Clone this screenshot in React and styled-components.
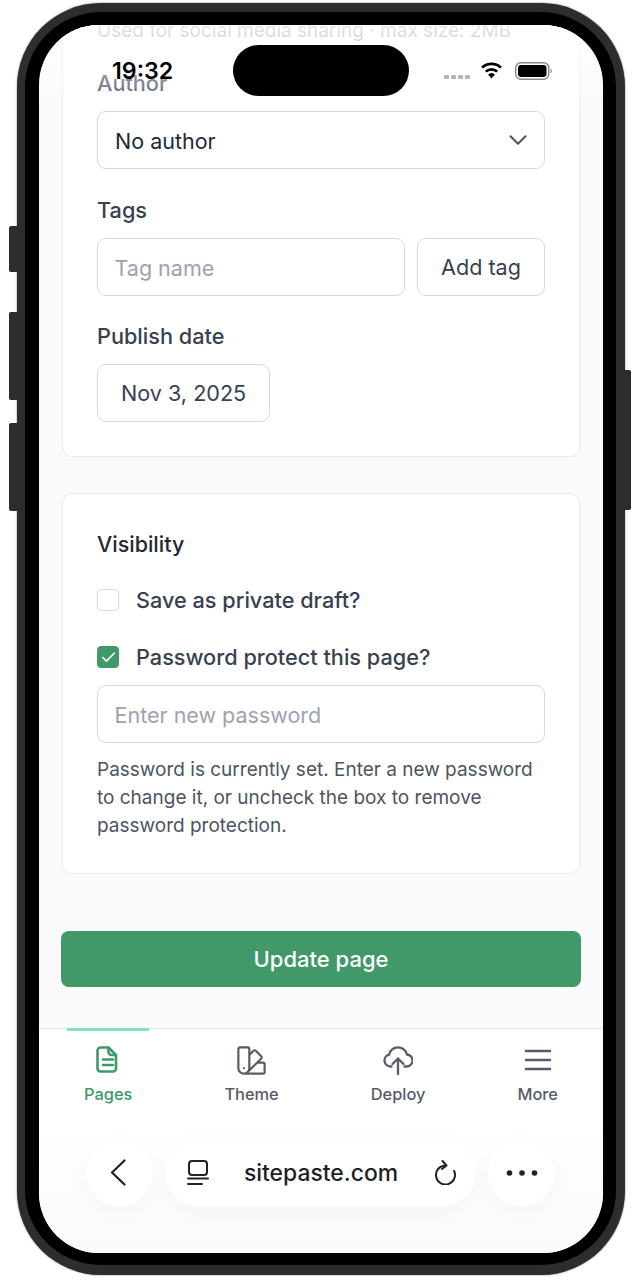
import React from "react";
import styled, { createGlobalStyle } from "styled-components";
import { ChevronDown, Check } from "lucide-react";
import { HiOutlineSwatch } from "react-icons/hi2";

const GlobalStyle = createGlobalStyle`
  * { box-sizing: border-box; }
  html, body { margin: 0; background: #fff; }
  body { font-family: Inter, "Noto Sans", sans-serif; color: #374151; }
`;

const Page = styled.div`
  width: 641px;
  height: 1280px;
  padding: 3px 16px 5px 17px;
  overflow: hidden;
`;

const Phone = styled.div`
  position: relative;
  height: 1272px;
  border-style: solid;
  border-color: #2d2d2d;
  border-width: 9px 9px 10px 8px;
  border-radius: 84px;
  box-shadow: 0 0 2px rgba(0, 0, 0, 0.55);
  background: #000;
  padding: 13px 13px 12px 14px;
`;

const SideButton = styled.span`
  position: absolute;
  top: ${(p) => p.$top}px;
  height: ${(p) => p.$height}px;
  width: ${(p) => (p.$right ? 6 : 8)}px;
  ${(p) => (p.$right ? "right: -15px;" : "left: -16px;")}
  background: #2d2d2d;
  border-radius: ${(p) => (p.$right ? "0 2px 2px 0" : "2px 0 0 2px")};
`;

const Screen = styled.div`
  position: relative;
  height: 100%;
  border-radius: 60px;
  overflow: hidden;
  background: #f9fafb;
  display: flex;
  flex-direction: column;
`;

const TopFade = styled.div`
  position: absolute;
  inset: 0 0 auto 0;
  height: 82px;
  background: linear-gradient(
    rgba(255, 255, 255, 0.82),
    rgba(255, 255, 255, 0.35) 75%,
    rgba(255, 255, 255, 0)
  );
`;

const StatusBar = styled.div`
  position: absolute;
  inset: 20px 0 auto 0;
  display: grid;
  grid-template-columns: 194px 176px 194px;
  align-items: center;
`;

const Time = styled.div`
  padding-left: 73px;
  font-size: 23.2px;
  font-weight: 600;
  line-height: 28px;
  color: #000;
`;

const Island = styled.div`
  height: 51px;
  border-radius: 26px;
  background: #000;
`;

const StatusIcons = styled.div`
  display: flex;
  align-items: center;
  padding-left: 35px;
`;

const SignalDots = styled.div`
  display: flex;
  gap: 2px;
  margin: 13px 10px 0 0;
`;

const SignalDot = styled.span`
  width: 5px;
  height: 4px;
  border-radius: 1px;
  background: #b4b4b4;
`;

const Battery = styled.svg`
  margin-left: 12px;
`;

const Main = styled.main`
  flex: 1;
  min-height: 0;
  overflow: hidden;
  display: flex;
  flex-direction: column;
  justify-content: flex-end;
  padding: 0 22px 41px;
`;

const Card = styled.section`
  flex-shrink: 0;
  margin: 0 1px ${(p) => p.$gap}px;
  padding: ${(p) => p.$top}px 34px 34px;
  background: #fff;
  border: 1px solid #e8eaed;
  border-radius: 10px;
`;

const Hint = styled.p`
  margin: 0 0 24px;
  font-size: 19px;
  line-height: 28px;
  color: #6b7280;
`;

const Label = styled.div`
  margin-top: ${(p) => p.$top || 0}px;
  margin-bottom: 14px;
  font-size: 21.7px;
  font-weight: 500;
  line-height: 28px;
  color: #374151;
`;

const Row = styled.div`
  display: flex;
  gap: 12px;
`;

const Select = styled.div`
  height: 58px;
  padding: 2px 18px 0 17px;
  display: flex;
  align-items: center;
  justify-content: space-between;
  border: 1.5px solid #d6d8dc;
  border-radius: 9px;
  background: #fff;
  font-size: 21.5px;
  color: #1f2937;
  svg { margin: -2px -7px 0 0; color: #4b5563; }
`;

const Input = styled.input`
  flex: 1;
  min-width: 0;
  width: 100%;
  display: block;
  height: 58px;
  padding: 2px 16.5px 0;
  border: 1.5px solid #d6d8dc;
  border-radius: 9px;
  background: #fff;
  font-family: inherit;
  font-size: 21.5px;
  color: #1f2937;
  outline: none;
  &::placeholder { color: #9ca3af; opacity: 1; }
`;

const Button = styled.button`
  flex-shrink: 0;
  height: 58px;
  padding: 0 23px;
  border: 1.5px solid #d6d8dc;
  border-radius: 9px;
  background: #fff;
  font-family: inherit;
  font-size: 21.6px;
  font-weight: 400;
  color: #374151;
`;

const SectionTitle = styled.h3`
  margin: 0 0 28px;
  font-size: 21.5px;
  font-weight: 500;
  line-height: 28px;
  color: #1f2937;
`;

const CheckRow = styled.label`
  display: flex;
  align-items: center;
  gap: 17px;
  height: 28px;
  margin-bottom: ${(p) => p.$gap}px;
  font-size: 21.7px;
  font-weight: 500;
  color: #374151;
`;

const Box = styled.span`
  width: 22px;
  height: 22px;
  flex-shrink: 0;
  display: flex;
  align-items: center;
  justify-content: center;
  border-radius: 4px;
  border: 1.5px solid ${(p) => (p.$checked ? "#419868" : "#d6d8dc")};
  background: ${(p) => (p.$checked ? "#419868" : "#fff")};
  color: #fff;
`;

const Help = styled.p`
  margin: 13px 0 -1px;
  font-size: 19px;
  line-height: 28px;
  color: #4b5563;
`;

const PrimaryButton = styled.button`
  flex-shrink: 0;
  height: 56px;
  border: none;
  border-radius: 8px;
  background: #419868;
  color: #fff;
  font-family: inherit;
  font-size: 22px;
  font-weight: 500;
`;

const Nav = styled.nav`
  flex-shrink: 0;
  height: 97px;
  display: flex;
  justify-content: space-between;
  padding: 0 28px;
  background: #fff;
  border-top: 1px solid #e5e7eb;
`;

const Tab = styled.a`
  margin-top: -1px;
  padding: 14px 17px 0;
  display: flex;
  flex-direction: column;
  align-items: center;
  gap: 9px;
  border-top: 3px solid ${(p) => (p.$active ? "#84e1bc" : "transparent")};
  color: ${(p) => (p.$active ? "#419868" : "#565c69")};
  font-size: 16.4px;
  font-weight: 500;
  line-height: 20px;
`;

const TabIcon = styled.span`
  width: 30px;
  height: 30px;
  display: flex;
  align-items: center;
  justify-content: center;
  svg { flex-shrink: 0; }
`;

const BrowserBar = styled.div`
  flex-shrink: 0;
  height: 128px;
  display: flex;
  gap: 12px;
  padding: 14px 48px 0 47px;
  background: linear-gradient(#fff, #fafafa);
`;

const RoundButton = styled.div`
  width: 67px;
  height: 67px;
  border-radius: 50%;
  background: #fff;
  display: flex;
  align-items: center;
  justify-content: center;
  box-shadow: 0 6px 24px rgba(0, 0, 0, 0.03);
`;

const BackGlyph = styled.svg`
  margin-right: 3px;
`;

const UrlPill = styled.div`
  flex: 1;
  height: 67px;
  padding: 0 19px 0 22px;
  border-radius: 34px;
  background: #fff;
  display: flex;
  align-items: center;
  justify-content: space-between;
  box-shadow: 0 6px 24px rgba(0, 0, 0, 0.03);
`;

const UrlText = styled.span`
  font-size: 22.9px;
  font-weight: 500;
  color: #1f1f1f;
`;

const PagesIcon = () => (
  <svg width="30" height="30" viewBox="0 0 30 30" fill="none" stroke="currentColor" strokeWidth="2.6" strokeLinecap="round" strokeLinejoin="round">
    <path d="M7.5 2.5h8l7.5 7.5v13.5a3 3 0 0 1-3 3H7.5a3 3 0 0 1-3-3v-18a3 3 0 0 1 3-3z" />
    <path d="M15.5 3v4a3 3 0 0 0 3 3H22.5" />
    <path d="M10 14.5h10M10 20h10" />
  </svg>
);

const DeployIcon = () => (
  <svg width="30" height="32" viewBox="0 0 30 32" fill="none" stroke="currentColor" strokeWidth="2.3" strokeLinecap="round" strokeLinejoin="round">
    <path d="M8.5 22.5H7.5a6 6 0 0 1-1.5-11.8 9.2 9.2 0 0 1 18-.2 6 6 0 0 1-1 12h-1.5" />
    <path d="M15 30V14.5M9.5 20l5.5-5.5 5.5 5.5" />
  </svg>
);

const MoreIcon = () => (
  <svg width="30" height="30" viewBox="0 0 30 30" fill="none" stroke="currentColor" strokeWidth="2.6" strokeLinecap="round">
    <path d="M3 6h24M3 15h24M3 24h24" />
  </svg>
);

const WifiIcon = () => (
  <svg width="23" height="17" viewBox="0 0 23 17">
    <path d="M11.5 16.5l-3.4-4a5 5 0 0 1 6.8 0z" fill="#000" />
    <path d="M5.8 9.6a8.4 8.4 0 0 1 11.4 0M2 5.6a14 14 0 0 1 19 0" fill="none" stroke="#000" strokeWidth="2.6" />
  </svg>
);

const BackIcon = () => (
  <BackGlyph width="16" height="27" viewBox="0 0 16 27" fill="none" stroke="#222" strokeWidth="2.2" strokeLinecap="round" strokeLinejoin="round">
    <path d="M14.5 1.5L2 13.5l12.5 12" />
  </BackGlyph>
);

const TabsIcon = () => (
  <svg width="22" height="25" viewBox="0 0 22 25" fill="none" stroke="#222" strokeWidth="2" strokeLinecap="round">
    <rect x="2" y="1" width="18" height="14" rx="3" />
    <path d="M1 18.5h20M1 24h14" />
  </svg>
);

const ReloadIcon = () => (
  <svg width="24" height="25" viewBox="0 0 24 25" fill="none" stroke="#222" strokeWidth="2" strokeLinecap="round" strokeLinejoin="round">
    <path d="M12.5 5.5a9.5 9.5 0 1 0 8.6 5.5" />
    <path d="M9.5 1l4 4.5-4.5 3.5" />
  </svg>
);

const DotsIcon = () => (
  <svg width="32" height="8" viewBox="0 0 32 8" fill="#222">
    <circle cx="3.5" cy="4" r="2.8" />
    <circle cx="16" cy="4" r="2.8" />
    <circle cx="28.5" cy="4" r="2.8" />
  </svg>
);

const tabs = [
  { label: "Pages", icon: <PagesIcon />, active: true },
  { label: "Theme", icon: <HiOutlineSwatch size={35} /> },
  { label: "Deploy", icon: <DeployIcon /> },
  { label: "More", icon: <MoreIcon /> },
];

function App() {
  return (
    <Page>
      <GlobalStyle />
      <Phone>
        <SideButton $top={214} $height={46} />
        <SideButton $top={300} $height={88} />
        <SideButton $top={411} $height={88} />
        <SideButton $right $top={358} $height={140} />
        <Screen>
          <Main>
            <Card $gap={36} $top={24}>
              <Hint>Used for social media sharing · max size: 2MB</Hint>
              <Label>Author</Label>
              <Select>
                No author
                <ChevronDown size={30} strokeWidth={1.6} />
              </Select>
              <Label $top={27}>Tags</Label>
              <Row>
                <Input placeholder="Tag name" />
                <Button>Add tag</Button>
              </Row>
              <Label $top={26}>Publish date</Label>
              <Button>Nov 3, 2025</Button>
            </Card>
            <Card $gap={57} $top={36}>
              <SectionTitle>Visibility</SectionTitle>
              <CheckRow $gap={29}>
                <Box />
                Save as private draft?
              </CheckRow>
              <CheckRow $gap={14}>
                <Box $checked>
                  <Check size={17} strokeWidth={2.4} />
                </Box>
                Password protect this page?
              </CheckRow>
              <Input placeholder="Enter new password" />
              <Help>
                Password is currently set. Enter a new password to change it, or
                uncheck the box to remove password protection.
              </Help>
            </Card>
            <PrimaryButton>Update page</PrimaryButton>
          </Main>
          <Nav>
            {tabs.map((tab) => (
              <Tab key={tab.label} $active={tab.active}>
                <TabIcon>{tab.icon}</TabIcon>
                {tab.label}
              </Tab>
            ))}
          </Nav>
          <BrowserBar>
            <RoundButton>
              <BackIcon />
            </RoundButton>
            <UrlPill>
              <TabsIcon />
              <UrlText>sitepaste.com</UrlText>
              <ReloadIcon />
            </UrlPill>
            <RoundButton>
              <DotsIcon />
            </RoundButton>
          </BrowserBar>
          <TopFade />
          <StatusBar>
            <Time>19:32</Time>
            <Island />
            <StatusIcons>
              <SignalDots>
                <SignalDot />
                <SignalDot />
                <SignalDot />
                <SignalDot />
              </SignalDots>
              <WifiIcon />
              <Battery width="37" height="18" viewBox="0 0 37 18">
                <rect x="0.75" y="0.75" width="33" height="16.5" rx="5" fill="none" stroke="#8a8a8a" strokeWidth="1.5" />
                <rect x="3" y="3" width="28.5" height="12" rx="3" fill="#000" />
                <path d="M35.5 6.5a3 3 0 0 1 0 5z" fill="#8a8a8a" />
              </Battery>
            </StatusIcons>
          </StatusBar>
        </Screen>
      </Phone>
    </Page>
  );
}

export default App;
